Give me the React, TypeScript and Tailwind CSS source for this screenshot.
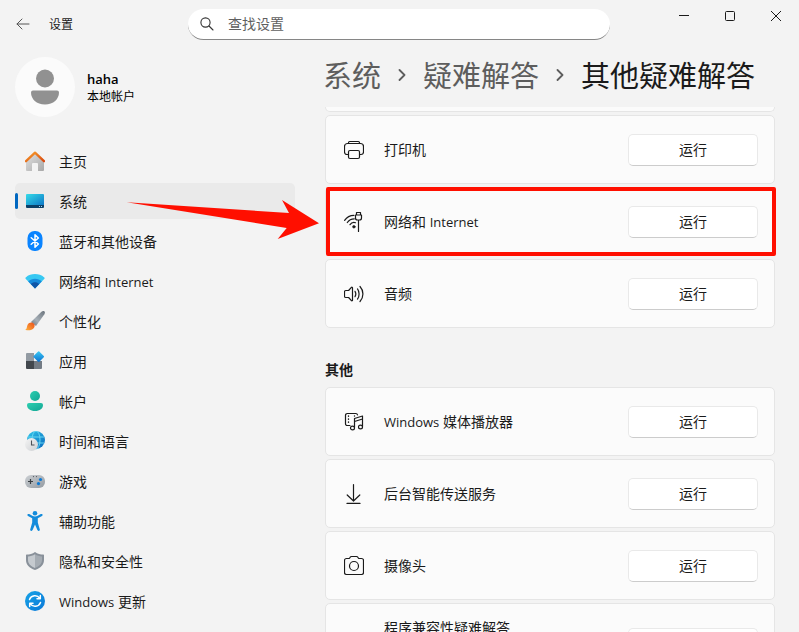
import { useState } from 'react';
import type { ReactNode } from 'react';

type IconProps = { className?: string };

// Latin words sit slightly smaller next to the Chinese glyphs
const Latin = ({ children }: { children: ReactNode }) => <span className="text-[13px]">{children}</span>;

/* ---------- Sidebar icons ---------- */

const HomeIcon = () => (
  <svg viewBox="0 0 20 20" className="w-5 h-5">
    <defs>
      <linearGradient id="homeWall" x1="0" y1="0" x2="1" y2="1">
        <stop offset="0" stopColor="#e2e2e2" />
        <stop offset="1" stopColor="#a8a8a8" />
      </linearGradient>
      <linearGradient id="homeRoof" x1="0" y1="0" x2="1" y2="1">
        <stop offset="0" stopColor="#f8a02c" />
        <stop offset="1" stopColor="#d9480f" />
      </linearGradient>
    </defs>
    <path d="M1 9.5 10 1.5l9 8V19a1 1 0 0 1-1 1h-5v-7a1 1 0 0 0-1-1H8a1 1 0 0 0-1 1v7H2a1 1 0 0 1-1-1z" fill="url(#homeWall)" />
    <path d="M1 10.2 10 1.7l9 8.5" fill="none" stroke="url(#homeRoof)" strokeWidth="2.3" strokeLinecap="round" strokeLinejoin="round" />
  </svg>
);

const SystemIcon = () => (
  <svg viewBox="0 0 20 20" className="w-5 h-5">
    <defs>
      <linearGradient id="sysScreen" x1="0" y1="0" x2="1" y2="1">
        <stop offset="0" stopColor="#35dbe8" />
        <stop offset="1" stopColor="#0c74c6" />
      </linearGradient>
    </defs>
    <path d="M2 3h16a1 1 0 0 1 1 1v11H1V4a1 1 0 0 1 1-1z" fill="url(#sysScreen)" />
    <path d="M1 14h18v2a1 1 0 0 1-1 1H2a1 1 0 0 1-1-1z" fill="#0b4068" />
    <path d="M14 15h1v1h-1zM16 15h1v1h-1z" fill="#a9dcf5" />
  </svg>
);

const BluetoothIcon = () => (
  <svg viewBox="0 0 20 20" className="w-5 h-5">
    <rect x="2.5" y="0" width="15" height="20" rx="7" fill="#0a84ff" />
    <path d="M6.2 6.8 13.4 13 10 16.2V3.8L13.4 7 6.2 13.2" fill="none" stroke="#fff" strokeWidth="1.5" strokeLinejoin="round" strokeLinecap="round" />
  </svg>
);

const WifiIcon = () => (
  <svg viewBox="0 0 20 20" className="w-5 h-5">
    <path d="M10 17.500.6 7.700C.2 7.200.3 6.700.7 6.400 6 2 14 2 19.300 6.400c.4.3.5.8.1 1.300z" fill="#37c8f2" />
    <path d="M10 17.500 3.200 10.400c3.600-3.500 10-3.500 13.600 0z" fill="#168bdc" />
    <path d="M10 17.500 5.800 13c2.300-2.400 6.100-2.400 8.400 0z" fill="#0e55a6" />
  </svg>
);

const BrushIcon = () => (
  <svg viewBox="0 0 20 20" className="w-5 h-5">
    <defs>
      <linearGradient id="brushHandle" x1="1" y1="0" x2="0" y2="1">
        <stop offset="0" stopColor="#6b747d" />
        <stop offset=".6" stopColor="#a7b0b8" />
        <stop offset="1" stopColor="#69727b" />
      </linearGradient>
      <linearGradient id="brushTip" x1="0" y1="1" x2="1" y2="0">
        <stop offset="0" stopColor="#ffb13b" />
        <stop offset="1" stopColor="#ea4f1c" />
      </linearGradient>
    </defs>
    <path d="M19.500.5c.7.7.5 1.700-.1 2.700L11 15 6 11 16.200 1c1-.9 2.500-1.200 3.300-.5z" fill="url(#brushHandle)" />
    <path d="M9.300 13.100c1.400 4.200-2.300 7.200-8.600 6-.4-.1-.4-.5-.1-.7 1.600-.9 1-2.600 2-4.700 1.300-2.600 5-3.200 6.700-.6z" fill="url(#brushTip)" />
  </svg>
);

const AppsIcon = () => (
  <svg viewBox="0 0 20 20" className="w-5 h-5">
    <defs>
      <linearGradient id="appsTile" x1="0" y1="0" x2="1" y2="1">
        <stop offset="0" stopColor="#3ccbf4" />
        <stop offset="1" stopColor="#0a6fd0" />
      </linearGradient>
    </defs>
    <path d="M2 2h7v8H1V3a1 1 0 0 1 1-1z" fill="#929aa2" />
    <path d="M1 10h8v8H2a1 1 0 0 1-1-1z" fill="#42474d" />
    <path d="M9 10h8v7a1 1 0 0 1-1 1H9z" fill="#737b84" />
    <rect x="9.7" y="1.6" width="8" height="8" rx=".8" transform="rotate(45 13.700 5.600)" fill="url(#appsTile)" />
  </svg>
);

const AccountIcon = () => (
  <svg viewBox="0 0 20 20" className="w-5 h-5">
    <defs>
      <linearGradient id="accountFill" x1="0" y1="0" x2="1" y2="1">
        <stop offset="0" stopColor="#2dcfb0" />
        <stop offset="1" stopColor="#12a594" />
      </linearGradient>
    </defs>
    <circle cx="10" cy="5" r="5" fill="url(#accountFill)" />
    <path d="M4 12h12a2 2 0 0 1 2 2c0 3.500-3.200 6-8 6s-8-2.500-8-6a2 2 0 0 1 2-2z" fill="url(#accountFill)" />
  </svg>
);

const TimeIcon = () => (
  <svg viewBox="0 0 20 20" className="w-5 h-5">
    <defs>
      <linearGradient id="globeFill" x1="0" y1="0" x2="1" y2="1">
        <stop offset="0" stopColor="#31c7ea" />
        <stop offset="1" stopColor="#0868bd" />
      </linearGradient>
      <linearGradient id="clockFill" x1="0" y1="0" x2="1" y2="1">
        <stop offset="0" stopColor="#f4f4f4" />
        <stop offset="1" stopColor="#cdd0d3" />
      </linearGradient>
    </defs>
    <circle cx="11" cy="9" r="9" fill="url(#globeFill)" />
    <g fill="none" stroke="#6fdcf5" strokeWidth=".9">
      <path d="M3 6h16M3 12h16" />
      <ellipse cx="11" cy="9" rx="4" ry="9" />
    </g>
    <circle cx="6.5" cy="13.5" r="6.5" fill="url(#clockFill)" />
    <path d="M6.500 9.500v4.500h3" fill="none" stroke="#4b5056" strokeWidth="1.1" />
  </svg>
);

const GamingIcon = () => (
  <svg viewBox="0 0 20 20" className="w-5 h-5">
    <defs>
      <linearGradient id="padFill" x1="0" y1="0" x2="1" y2="1">
        <stop offset="0" stopColor="#ccd0d4" />
        <stop offset="1" stopColor="#939aa1" />
      </linearGradient>
    </defs>
    <rect x="0" y="4" width="20" height="13" rx="6" fill="url(#padFill)" />
    <path d="M5.500 8v5M3 10.500h5" stroke="#383d42" strokeWidth="1.2" />
    <circle cx="8.5" cy="5.600" r=".6" fill="#50565c" />
    <circle cx="11.5" cy="5.600" r=".6" fill="#50565c" />
    <circle cx="15.5" cy="8.500" r="1.6" fill="#0b78d4" />
    <circle cx="13.5" cy="12.600" r="1.6" fill="#0b78d4" />
  </svg>
);

const AccessibilityIcon = () => (
  <svg viewBox="0 0 20 20" className="w-5 h-5">
    <g fill="#138bdb">
      <circle cx="10" cy="2.3" r="2.3" />
      <path d="M2.700 3.200c-.5.5-.4 1.500.3 1.900L7.200 7.300v4.200l-2 6.900c-.2.7.2 1.300.9 1.500.6.2 1.300-.2 1.500-.8L10 13.500l2.400 5.600c.2.6.9 1 1.500.8.7-.2 1.100-.8.9-1.500l-2-6.900V7.300L17 5.100c.7-.4.8-1.400.3-1.900-.4-.4-1-.4-1.500-.1l-3.100 1.700c-1.700.9-3.700.9-5.400 0L4.200 3.100c-.5-.3-1.100-.3-1.500.1z" />
    </g>
  </svg>
);

const ShieldIcon = () => (
  <svg viewBox="0 0 20 20" className="w-5 h-5">
    <path d="M10 1c2.600 1.800 5.400 2.500 8.400 2.600.3 0 .6.300.6.600V9c0 4.700-3.300 8-9 10-5.700-2-9-5.300-9-10V4.200c0-.3.300-.6.600-.6C4.600 3.500 7.400 2.800 10 1z" fill="#89919a" />
    <path d="M10 3.200V17C5.500 15.200 3 12.500 3 9V5.400c2.600-.2 4.900-.8 7-2.200z" fill="#c5cacf" />
    <path d="M10 3.200V17c4.500-1.800 7-4.500 7-8V5.400c-2.600-.2-4.900-.8-7-2.200z" fill="#a5acb3" />
  </svg>
);

const UpdateIcon = () => (
  <svg viewBox="0 0 20 20" className="w-5 h-5">
    <defs>
      <linearGradient id="updateFill" x1="0" y1="0" x2="1" y2="1">
        <stop offset="0" stopColor="#18a3e6" />
        <stop offset="1" stopColor="#0a78d8" />
      </linearGradient>
    </defs>
    <circle cx="10" cy="10" r="10" fill="url(#updateFill)" />
    <g fill="none" stroke="#fff" strokeWidth="1.5" strokeLinecap="round" strokeLinejoin="round">
      <path d="M4.500 8.500a5.800 5.800 0 0 1 10.300-1.200M15.300 4.500v3.300H12" />
      <path d="M15.500 11.500a5.800 5.800 0 0 1-10.300 1.200M4.700 15.500v-3.300H8" />
    </g>
  </svg>
);

/* ---------- Troubleshooter icons ---------- */

const outline = {
  viewBox: '0 -1 20 21',
  fill: 'none',
  stroke: 'currentColor',
  strokeWidth: 1.2,
  strokeLinecap: 'round',
  strokeLinejoin: 'round',
} as const;

const PrinterIcon = ({ className }: IconProps) => (
  <svg {...outline} className={className}>
    <path d="M4.500 14.500H3A2.500 2.500 0 0 1 .5 12V6.500a3 3 0 0 1 3-3h13a3 3 0 0 1 3 3V12a2.500 2.500 0 0 1-2.500 2.500h-1.500" />
    <path d="M4.500 3.500V2.700a1.200 1.200 0 0 1 1.200-1.200h8.600a1.200 1.200 0 0 1 1.200 1.200v.8" />
    <rect x="4.5" y="10.500" width="11" height="8" rx="1.5" />
  </svg>
);

const NetworkIcon = ({ className }: IconProps) => (
  <svg {...outline} className={className}>
    <path d="M.6 8.300C2.900 4.900 6.200 3.300 10 3.300" />
    <path d="M3.300 10.500c1.600-2.400 4-3.700 7-3.700" />
    <path d="M6 12.700c1.200-1.800 3.300-2.700 5.500-2" />
    <circle cx="9.9" cy="14.800" r="1.3" fill="currentColor" strokeWidth=".6" />
    <path d="M12.500.5h4v2.500h-4zM11.500 3h6v3c0 1.200-.8 2-2 2h-2c-1.200 0-2-.8-2-2zM14.500 8v11.500" />
  </svg>
);

const AudioIcon = ({ className }: IconProps) => (
  <svg {...outline} className={className}>
    <path d="M8.500 3.800v12.400c0 .6-.7.900-1.100.5L4.600 13.500H1.800c-.7 0-1.300-.5-1.300-1.200V7.700c0-.7.6-1.200 1.300-1.200h2.800l2.800-3.200c.4-.4 1.100-.1 1.100.5z" />
    <path d="M11 7.300c1 1.600 1 3.800 0 5.400M13.500 4.900c2.100 2.900 2.100 7.300 0 10.200M16 2.500c3.900 4.200 3.900 10.800 0 15" />
  </svg>
);

const MediaIcon = ({ className }: IconProps) => (
  <svg {...outline} className={className}>
    <path d="M6 13.500H3.300a1.800 1.800 0 0 1-1.800-1.800V3.300a1.800 1.800 0 0 1 1.800-1.800h8.600a1.800 1.800 0 0 1 1.600 1.300" />
    <path d="M4.500 4v.3M4.500 7v.3M4.500 10v.3M10.500 4v.1" strokeWidth="1.4" />
    <path d="M10.500 15.500V6.500l8-2.500v10.500M10.500 9.500l8-2.500" />
    <ellipse cx="8.5" cy="16" rx="2" ry="1.9" />
    <ellipse cx="16.5" cy="15" rx="2" ry="1.9" />
  </svg>
);

const DownloadIcon = ({ className }: IconProps) => (
  <svg {...outline} className={className}>
    <path d="M9.500.5v16M3.200 11l6.300 6 6.300-6M3 19.400h13" />
  </svg>
);

const CameraIcon = ({ className }: IconProps) => (
  <svg {...outline} className={className}>
    <path d="M7.500.5h5c.6 0 1.100.3 1.400.8l.8 1.200h2.800c1.100 0 2 .9 2 2v12c0 1.100-.9 2-2 2h-15c-1.100 0-2-.9-2-2v-12c0-1.100.9-2 2-2h2.800l.8-1.200c.3-.5.8-.8 1.400-.8z" />
    <circle cx="10" cy="10" r="4.500" />
  </svg>
);

const Chevron = () => (
  <svg viewBox="0 0 8 12" className="w-2 h-3 mx-[17px] shrink-0" fill="none" stroke="#5d5d5d" strokeWidth="1.8" strokeLinecap="round" strokeLinejoin="round">
    <path d="m1.500 1 5 5-5 5" />
  </svg>
);

/* ---------- Data ---------- */

const navItems: { id: string; label: ReactNode; icon: React.ElementType }[] = [
  { id: 'home', label: '主页', icon: HomeIcon },
  { id: 'system', label: '系统', icon: SystemIcon },
  { id: 'bluetooth', label: '蓝牙和其他设备', icon: BluetoothIcon },
  { id: 'network', label: <>网络和 <Latin>Internet</Latin></>, icon: WifiIcon },
  { id: 'personalization', label: '个性化', icon: BrushIcon },
  { id: 'apps', label: '应用', icon: AppsIcon },
  { id: 'accounts', label: '帐户', icon: AccountIcon },
  { id: 'time', label: '时间和语言', icon: TimeIcon },
  { id: 'gaming', label: '游戏', icon: GamingIcon },
  { id: 'accessibility', label: '辅助功能', icon: AccessibilityIcon },
  { id: 'privacy', label: '隐私和安全性', icon: ShieldIcon },
  { id: 'update', label: <><Latin>Windows</Latin> 更新</>, icon: UpdateIcon },
];

type Troubleshooter = {
  id: string;
  label: ReactNode;
  icon?: React.ElementType;
  highlighted?: boolean;
  tall?: boolean;
};

const frequent: Troubleshooter[] = [
  { id: 'printer', label: '打印机', icon: PrinterIcon },
  { id: 'net', label: <>网络和 <Latin>Internet</Latin></>, icon: NetworkIcon, highlighted: true },
  { id: 'audio', label: '音频', icon: AudioIcon },
];

const others: Troubleshooter[] = [
  { id: 'media', label: <><Latin>Windows</Latin> 媒体播放器</>, icon: MediaIcon },
  { id: 'bits', label: '后台智能传送服务', icon: DownloadIcon },
  { id: 'camera', label: '摄像头', icon: CameraIcon },
  { id: 'compat', label: '程序兼容性疑难解答', tall: true },
];

/* ---------- Components ---------- */

function TroubleshooterRow({ item }: { item: Troubleshooter }) {
  const Icon = item.icon;
  return (
    <li className="relative">
      <div
        className={`flex gap-5 pl-[18px] pr-4 rounded-[5px] border border-[#e5e5e5] bg-[#fbfbfb] ${
          item.tall ? 'h-[84px] items-start pt-[14px]' : 'h-[69px] items-center'
        }`}
      >
        {Icon ? <Icon className="w-5 h-[21px] shrink-0" /> : <span className="w-5 shrink-0" />}
        <span id={`label-${item.id}`} className="flex-1 leading-5">{item.label}</span>
        <button
          id={`run-${item.id}`}
          aria-labelledby={`run-${item.id} label-${item.id}`}
          className={`w-[130px] h-8 shrink-0 rounded-[5px] border border-[#e9e9e9] border-b-[#cccccc] bg-white hover:bg-[#f9f9f9] ${
            item.tall ? 'mt-[10px]' : ''
          }`}
        >
          运行
        </button>
      </div>
      {item.highlighted && (
        <div className="absolute inset-y-0 left-px -right-px border-4 border-[#ff0f00] rounded-[2px] pointer-events-none" />
      )}
    </li>
  );
}

export default function App() {
  const [active, setActive] = useState('system');
  const [query, setQuery] = useState('');

  return (
    <div className="h-screen overflow-hidden flex flex-col bg-[#f3f3f3] text-[#1a1a1a] text-sm font-['Open_Sans','Noto_Sans_CJK_SC',sans-serif]">
      {/* Title bar */}
      <header className="h-12 shrink-0 flex items-center pl-4">
        <button aria-label="返回" className="w-[33px] h-8 flex items-center">
          <svg viewBox="0 0 14 12" className="w-[14px] h-3" fill="none" stroke="#555" strokeLinecap="round" strokeLinejoin="round">
            <path d="M13 6H1M6 1 1 6l5 5" />
          </svg>
        </button>
        <span className="w-[139px] pt-0.5 text-xs">设置</span>
        <label className="flex-1 mr-[51px] h-[31px] flex items-center rounded-full bg-white border-b border-[#868686]">
          <svg viewBox="0 0 14 14" className="w-[14px] h-[14px] ml-3 mr-[14px] shrink-0" fill="none" stroke="#333" strokeWidth="1.1" strokeLinecap="round">
            <circle cx="5.5" cy="5.500" r="4.600" />
            <path d="m9 9 4 4" />
          </svg>
          <input
            type="text"
            aria-label="查找设置"
            placeholder="查找设置"
            value={query}
            onChange={(e) => setQuery(e.target.value)}
            className="flex-1 min-w-0 bg-transparent outline-none placeholder:text-[#5f5f5f]"
          />
        </label>
        <div className="flex self-start">
          <button aria-label="最小化" className="w-[46px] h-8 flex items-center justify-center">
            <svg viewBox="0 0 10 10" className="w-[10px] h-[10px]" stroke="#1a1a1a"><path d="M0 4.500h10" /></svg>
          </button>
          <button aria-label="最大化" className="w-[46px] h-8 flex items-center justify-center">
            <svg viewBox="0 0 10 10" className="w-[10px] h-[10px]" fill="none" stroke="#1a1a1a"><rect x=".5" y=".5" width="9" height="9" rx="1" /></svg>
          </button>
          <button aria-label="关闭" className="w-[46px] h-8 flex items-center justify-center">
            <svg viewBox="0 0 10 10" className="w-[10px] h-[10px]" stroke="#1a1a1a"><path d="m0 0 10 10M10 0 0 10" /></svg>
          </button>
        </div>
      </header>

      <div className="relative flex-1 min-h-0 flex gap-7 pl-[15px] pr-6">
        {/* Sidebar */}
        <aside className="w-[280px] shrink-0">
          <div className="flex items-center gap-3 pt-[9px]">
            <div className="w-15 h-15 rounded-full bg-[#fbfbfb] flex items-center justify-center">
              <svg viewBox="0 0 28 36" className="w-7 h-9" fill="#919191">
                <circle cx="14" cy="9.5" r="9" />
                <path d="M2 21.500h24a2 2 0 0 1 2 2c0 6.500-5.500 12-14 12s-14-5.500-14-12a2 2 0 0 1 2-2z" />
              </svg>
            </div>
            <div className="pt-0.5">
              <p className="text-[13px] leading-[18px] font-semibold text-black">haha</p>
              <p className="text-xs leading-[18px] text-black">本地帐户</p>
            </div>
          </div>

          <nav className="mt-[26px] flex flex-col gap-1">
            {navItems.map(({ id, label, icon: Icon }) => (
              <a
                key={id}
                href={`#${id}`}
                onClick={() => setActive(id)}
                className={`relative h-9 flex items-center gap-[14px] pl-[10px] rounded-[5px] ${
                  active === id ? 'bg-[#eaeaea]' : 'hover:bg-[#eeeeee]'
                }`}
              >
                {active === id && <span className="absolute left-0 w-[3px] h-4 rounded-full bg-[#0067c0]" />}
                <Icon />
                <span className="pt-0.5">{label}</span>
              </a>
            ))}
          </nav>
        </aside>

        {/* Content */}
        <main className="flex-1 min-w-0 flex flex-col">
          <h1 className="h-[54px] mb-[5px] shrink-0 flex items-center whitespace-nowrap text-[29px] leading-none">
            <a href="#system" className="text-[#5d5d5d]">系统</a>
            <Chevron />
            <a href="#troubleshoot" className="text-[#5d5d5d]">疑难解答</a>
            <Chevron />
            <span>其他疑难解答</span>
          </h1>

          <div className="flex-1 min-h-0 pl-0.5 overflow-y-clip">
            <div className="h-[5px] mb-[3px] rounded-b-[5px] border border-t-0 border-[#e5e5e5] bg-[#fbfbfb]" />
            <ul className="flex flex-col gap-[3px]">
              {frequent.map((item) => (
                <TroubleshooterRow key={item.id} item={item} />
              ))}
            </ul>
            <h2 className="mt-8 mb-[7px] leading-5 font-semibold">其他</h2>
            <ul className="flex flex-col gap-[3px]">
              {others.map((item) => (
                <TroubleshooterRow key={item.id} item={item} />
              ))}
            </ul>
          </div>
        </main>

        {/* Pointer from the selected page to the network row */}
        <svg viewBox="0 0 194 42" className="absolute left-[126px] top-[151px] w-[194px] h-[42px] pointer-events-none" fill="#ff0f00">
          <path d="M.7 3.300 163 14 156 1l37 23.300L151.700 40l9-11z" />
        </svg>
      </div>
    </div>
  );
}
